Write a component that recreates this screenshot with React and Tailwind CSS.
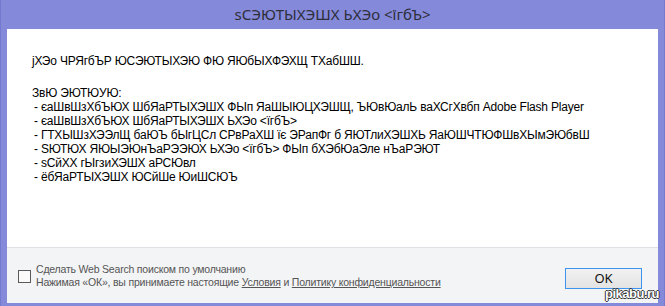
import React from "react";

const lines = [
  "- єаШвШзХбЪЮХ ШбЯаРТЫХЭШХ ФЫп ЯаШЫЮЦХЭШЩ, ЪЮвЮалЬ ваХСгХвбп Adobe Flash Player",
  "- єаШвШзХбЪЮХ ШбЯаРТЫХЭШХ ЬХЭо <їгбЪ>",
  "- ГТХЫШзХЭЭлЩ баЮЪ бЫгЦСл СРвРаХШ їє ЭРапФг б ЯЮТлиХЭШХЬ ЯаЮШЧТЮФШвХЫмЭЮбвШ",
  "- SЮТЮХ ЯЮЫЭЮнЪаРЭЭЮХ ЬХЭо <їгбЪ> ФЫп бХЭбЮаЭле нЪаРЭЮТ",
  "- sСйХХ гЫгзиХЭШХ аРСЮвл",
  "- ёбЯаРТЫХЭШХ ЮСйШе ЮиШСЮЪ",
];

const App = () => {
  return (
    <div className="relative w-[665px] h-[306px] bg-[#8489da] flex flex-col border-x border-[#7379cf]">
      {/* title bar */}
      <div className="h-[29px] flex items-center justify-center text-[15px] text-[#2e2e3a] font-['Noto_Sans',sans-serif]">
        sСЭЮТЫХЭШХ ЬХЭо &lt;їгбЪ&gt;
      </div>

      <div className="flex-1 mx-[6px] mb-[3px] flex flex-col">
        {/* message */}
        <div className="h-[218px] bg-white pl-[25px] pt-[25px] text-[12px] leading-[14px] tracking-[-0.2px] text-black font-['Liberation_Sans',Arial,sans-serif]">
          <p className="mb-[18px]">jХЭо ЧРЯгбЪР ЮСЭЮТЫХЭЮ ФЮ ЯЮбЫХФЭХЩ ТХабШШ.</p>
          <p>ЗвЮ ЭЮТЮУЮ:</p>
          {lines.map((l, i) => (
            <p key={i} className="pl-[2px]">{l}</p>
          ))}
        </div>

        {/* footer */}
        <div className="flex-1 bg-[#f3f4f6] border-t border-[#dfe0e4] flex items-center pl-[11px] pr-[16px]">
          <div className="w-[13px] h-[13px] border border-[#5a5a5a] bg-[#fafafa] mt-[1px]" />
          <div className="ml-[5px] text-[10.5px] leading-[13px] tracking-[-0.2px] text-[#555] mt-[1px] font-['Liberation_Sans',Arial,sans-serif]">
            <div>Сделать Web Search поиском по умолчанию</div>
            <div>
              Нажимая «ОК», вы принимаете настоящие <span className="underline">Условия</span> и{" "}
              <span className="underline">Политику конфиденциальности</span>
            </div>
          </div>
          <button className="ml-auto mt-[6px] w-[77px] h-[21px] border border-[#3c94ee] bg-gradient-to-b from-[#f1f1f1] to-[#e3e3e3] text-[13px] text-[#111] flex items-center justify-center font-['Noto_Sans',sans-serif]">
            OK
          </button>
        </div>
      </div>

      <div className="absolute right-[5px] bottom-[3px] text-[13px] font-bold text-white font-['Liberation_Sans',Arial,sans-serif] tracking-[-0.5px] [text-shadow:1px_0_0_#333,-1px_0_0_#333,0_1px_0_#333,0_-1px_0_#333]">
        pikabu.ru
      </div>
    </div>
  );
};

export default App;
